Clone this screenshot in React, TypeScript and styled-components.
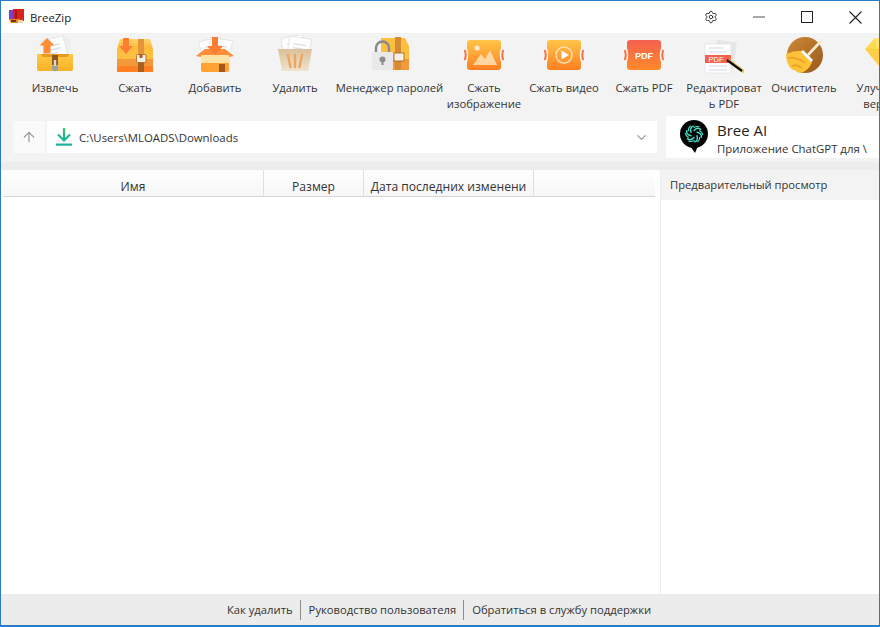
import React from 'react';
import styled, { createGlobalStyle } from 'styled-components';
import { Settings, ArrowUp, ChevronDown } from 'lucide-react';

const GlobalStyle = createGlobalStyle`
  html, body {
    margin: 0;
    height: 100%;
    overflow: hidden;
    background: #fff;
  }
  #root {
    height: 100%;
  }
`;

const Window = styled.div`
  box-sizing: border-box;
  display: flex;
  flex-direction: column;
  height: 627px;
  width: 880px;
  border: 1px solid #2b7bc4;
  border-bottom-width: 2px;
  background: #fff;
  font-family: 'Open Sans', 'Noto Sans', sans-serif;
  font-size: 12px;
  color: #333;
  overflow: hidden;
`;

const TitleBar = styled.div`
  display: flex;
  align-items: center;
  height: 32px;
  flex-shrink: 0;
  padding-left: 7px;
  background: #fff;
`;

const AppTitle = styled.span`
  margin-left: 5px;
  font-size: 11.4px;
  color: #222;
  flex: 1;
`;

const WindowButton = styled.div<{ $width: number }>`
  display: flex;
  align-items: center;
  justify-content: center;
  width: ${(p) => p.$width}px;
  height: 32px;
  color: #222;
`;

const MinimizeMark = styled.div`
  width: 12px;
  height: 1.5px;
  background: #a8a8a8;
`;

const MaximizeMark = styled.div`
  box-sizing: border-box;
  width: 12px;
  height: 12px;
  border: 1.4px solid #222;
`;

const Toolbar = styled.div`
  flex-shrink: 0;
  background: #f3f3f3;
`;

const ToolRow = styled.div`
  display: flex;
  height: 79px;
  padding-left: 14px;
  overflow: hidden;
`;

const Tool = styled.div<{ $width?: number }>`
  display: flex;
  flex-direction: column;
  align-items: center;
  flex-shrink: 0;
  box-sizing: border-box;
  width: ${(p) => p.$width ?? 80}px;
  padding-top: 2px;
`;

const ToolIcon = styled.svg`
  display: block;
  width: 40px;
  height: 40px;
  flex-shrink: 0;
`;

const ToolLabel = styled.div`
  margin-top: 5px;
  width: 100%;
  text-align: center;
  font-size: 11.25px;
  line-height: 16px;
  color: #333;
  overflow-wrap: anywhere;
`;

const AddressRow = styled.div`
  display: flex;
  align-items: center;
  gap: 2px;
  height: 50px;
  padding-left: 12px;
`;

const UpButton = styled.div`
  display: flex;
  align-items: center;
  justify-content: center;
  width: 32px;
  height: 32px;
  background: #fafafa;
  color: #999;
`;

const PathBar = styled.div`
  display: flex;
  align-items: center;
  width: 610px;
  height: 32px;
  background: #fff;
  padding: 0 8px 0 9px;
  box-sizing: border-box;
`;

const PathText = styled.span`
  flex: 1;
  margin-left: 7px;
  font-size: 11.4px;
  color: #333;
`;

const AiCard = styled.div`
  display: flex;
  align-items: center;
  flex: 1;
  height: 42px;
  margin-left: 7px;
  padding-left: 14px;
  background: #fff;
  overflow: hidden;
`;

const AiText = styled.div`
  margin: 2px 0 0 9px;
  white-space: nowrap;
`;

const AiTitle = styled.div`
  font-size: 15px;
  line-height: 20px;
  color: #222;
`;

const AiSub = styled.div`
  margin-top: 1px;
  font-size: 11.4px;
  line-height: 16px;
  color: #333;
`;

const Strip = styled.div`
  height: 8px;
  flex-shrink: 0;
  background: #ededed;
`;

const Main = styled.div`
  display: flex;
  flex: 1;
  min-height: 0;
`;

const ListPane = styled.div`
  box-sizing: border-box;
  width: 659px;
  padding: 0 5px 0 2px;
  background: #fff;
`;

const TableHeader = styled.div`
  display: grid;
  grid-template-columns: 261px 100px 170px 1fr;
  height: 27px;
  box-sizing: border-box;
  border-bottom: 1px solid #d6d6d6;
  background: linear-gradient(#fff, #f6f6f6);
`;

const HeaderCell = styled.div`
  display: flex;
  align-items: center;
  justify-content: center;
  padding-top: 6px;
  border-right: 1px solid #e0e0e0;
  font-size: 12.1px;
  color: #333;
  white-space: nowrap;
  overflow: hidden;

  &:last-child {
    border-right: none;
  }
`;

const PreviewPane = styled.div`
  flex: 1;
  border-left: 1px solid #eeeeee;
`;

const PreviewHeader = styled.div`
  display: flex;
  align-items: center;
  box-sizing: border-box;
  height: 30px;
  padding: 0 0 2px 9px;
  background: #f3f3f3;
  font-size: 11.2px;
  color: #333;
`;

const Footer = styled.div`
  display: flex;
  align-items: center;
  justify-content: center;
  box-sizing: border-box;
  height: 31px;
  padding: 1px 3px 0 0;
  flex-shrink: 0;
  background: #ececec;
`;

const FooterLink = styled.span`
  padding: 0 7px 0 8px;
  font-size: 11.25px;
  line-height: 20px;
  color: #333;
  border-left: 1px solid #8e8e8e;

  &:first-child {
    border-left: none;
  }
`;

const AppLogo = () => (
  <svg width="17" height="16" viewBox="0 0 17 16">
    <rect x="1" y="1" width="7" height="10" fill="#7b3fd0" />
    <rect x="5" y="0" width="11" height="12" fill="#d9231f" />
    <rect x="7" y="1" width="2" height="10" fill="#a8160f" />
    <path d="M1 10h11l2 4H3z" fill="#e8862a" />
    <rect x="10" y="11" width="5" height="3" fill="#f4d9a0" />
    <rect x="3" y="11" width="5" height="2" fill="#7a2a10" />
  </svg>
);

const Paper = ({ angle, x = 9, y = 2 }: { angle: number; x?: number; y?: number }) => (
  <g transform={`rotate(${angle} 20 14)`}>
    <rect x={x} y={y} width="22" height="22" fill="#fdfdfd" stroke="#dedede" strokeWidth="0.7" />
    <path d={`M${x + 5} ${y + 7}h12M${x + 5} ${y + 11}h12M${x + 5} ${y + 15}h8`} stroke="#cfd6dc" strokeWidth="1" />
  </g>
);

const ExtractIcon = () => (
  <ToolIcon viewBox="0 0 40 40">
    <defs>
      <linearGradient id="extractTray" x1="0" y1="0" x2="0" y2="1">
        <stop offset="0" stopColor="#ffcb45" />
        <stop offset="1" stopColor="#fab024" />
      </linearGradient>
    </defs>
    <rect x="24" y="3" width="11" height="18" fill="#eeeeee" transform="rotate(8 30 12)" />
    <Paper angle={-14} x={9} y={3} />
    <path d="M12 3l7.5 7.5h-4v8h-7v-8h-4z" fill="#ff8c35" />
    <path d="M2 19h4l1 3h26l1-3h4v15a2 2 0 0 1-2 2H4a2 2 0 0 1-2-2z" fill="url(#extractTray)" />
    <path d="M6 19h28l-1 3H7z" fill="#e89a1e" />
    <rect x="17" y="20" width="6" height="10" fill="#8d5522" />
    <circle cx="20" cy="33" r="3.2" fill="#9aa0a6" />
    <rect x="18.8" y="25" width="2.4" height="6" fill="#d9d9d9" />
  </ToolIcon>
);

const CompressIcon = () => (
  <ToolIcon viewBox="0 0 40 40">
    <defs>
      <linearGradient id="compressLid" x1="0" y1="0" x2="0" y2="1">
        <stop offset="0" stopColor="#ffd466" />
        <stop offset="1" stopColor="#fdb638" />
      </linearGradient>
    </defs>
    <path d="M5 4h30l3 10H2z" fill="url(#compressLid)" />
    <rect x="2" y="14" width="36" height="10" fill="#fcbf3f" />
    <rect x="2" y="24" width="36" height="7" fill="#f3993a" />
    <rect x="2" y="31" width="36" height="6" fill="#ff7f22" />
    <path d="M23 4h6v20h-6z" fill="#e3963c" />
    <path d="M23 24h6v13h-6z" fill="#a9601d" />
    <rect x="21.5" y="19.5" width="9.5" height="8" rx="1" fill="#f4efe7" stroke="#a9601d" strokeWidth="0.8" />
    <rect x="24.5" y="19.5" width="3" height="3.5" fill="#a9601d" />
    <path d="M8 3h6v8h4l-7 8-7-8h4z" fill="#ff7d33" />
  </ToolIcon>
);

const AddIcon = () => (
  <ToolIcon viewBox="0 0 40 40">
    <Paper angle={-16} x={6} y={3} />
    <Paper angle={10} x={14} y={3} />
    <path d="M1 21l9-7h20l9 7-5 1H6z" fill="#ff8e3a" />
    <rect x="6" y="20" width="28" height="8" fill="#ffe3a4" />
    <path d="M6 28h28v7a2 2 0 0 1-2 2H8a2 2 0 0 1-2-2z" fill="#ffa233" />
    <rect x="24" y="29" width="6" height="8" fill="#a5561a" />
    <path d="M17 2h6v9h5l-8 9-8-9h5z" fill="#ff7d33" />
  </ToolIcon>
);

const DeleteIcon = () => (
  <ToolIcon viewBox="0 0 40 40">
    <defs>
      <linearGradient id="basket" x1="0" y1="0" x2="0" y2="1">
        <stop offset="0" stopColor="#dcc09a" />
        <stop offset="1" stopColor="#eee3cc" />
      </linearGradient>
    </defs>
    <Paper angle={-10} x={8} y={1} />
    <Paper angle={8} x={13} y={2} />
    <path d="M3 14h34l-4 22H7z" fill="url(#basket)" />
    <path d="M13 20l2.5 12M20 20v12M27 20l-2.5 12" stroke="#eda65f" strokeWidth="2.4" strokeLinecap="round" />
  </ToolIcon>
);

const PasswordIcon = () => (
  <ToolIcon viewBox="0 0 40 40">
    <path d="M11 3h24l4 8v24H11z" fill="#fcbf3f" />
    <rect x="11" y="24" width="28" height="11" fill="#f3993a" />
    <rect x="25" y="2" width="6" height="33" fill="#d58a36" />
    <rect x="24" y="18" width="10" height="8" fill="#f4efe7" stroke="#a9601d" strokeWidth="0.8" />
    <path d="M6 18v-5a6.5 6.5 0 0 1 13 0v5" fill="none" stroke="#8a8a8a" strokeWidth="2.4" />
    <rect x="2" y="17" width="21" height="18" rx="1.5" fill="#e9e9e9" />
    <circle cx="12.5" cy="24.5" r="3" fill="#8d8d8d" />
    <rect x="11.5" y="25" width="2" height="5" fill="#8d8d8d" />
  </ToolIcon>
);

const badgePath =
  'M6 5H34Q37 5 37 8V13Q34.5 20 37 27V32Q37 35 34 35H6Q3 35 3 32V27Q5.5 20 3 13V8Q3 5 6 5Z';

const CompressBadge = ({
  id,
  top,
  bottom,
  children,
}: {
  id: string;
  top: string;
  bottom: string;
  children: React.ReactNode;
}) => (
  <ToolIcon viewBox="0 0 40 40">
    <defs>
      <linearGradient id={id} x1="0" y1="0" x2="0" y2="1">
        <stop offset="0" stopColor={top} />
        <stop offset="1" stopColor={bottom} />
      </linearGradient>
    </defs>
    <path d={badgePath} fill={`url(#${id})`} />
    <path d="M0.5 15Q3 20 0.5 25M39.5 15Q37 20 39.5 25" fill="none" stroke="#ff6f3c" strokeWidth="2" />
    {children}
  </ToolIcon>
);

const EditPdfIcon = () => (
  <ToolIcon viewBox="0 0 40 40">
    <rect x="11" y="6" width="20" height="27" fill="#e6e6e6" transform="rotate(8 21 20)" />
    <rect x="1" y="9" width="26" height="29" fill="#fdfdfd" stroke="#e2e2e2" strokeWidth="0.6" />
    <path d="M5 13h14M5 17h18M5 31h18M5 35h18" stroke="#d3dbe3" strokeWidth="1" />
    <rect x="1" y="20" width="26" height="8" fill="#f4624f" />
    <text x="12" y="27" fontFamily="'Liberation Sans', sans-serif" fontSize="7.5" fill="#fff" textAnchor="middle">
      PDF
    </text>
    <path d="M24 25L40 37" stroke="#f5c542" strokeWidth="3.4" />
    <path d="M23 25L38 36" stroke="#111" strokeWidth="2.2" />
  </ToolIcon>
);

const CleanerIcon = () => (
  <ToolIcon viewBox="0 0 40 40">
    <defs>
      <linearGradient id="cleanerDisc" x1="0" y1="0" x2="1" y2="1">
        <stop offset="0" stopColor="#cf8a35" />
        <stop offset="1" stopColor="#97581b" />
      </linearGradient>
    </defs>
    <circle cx="21" cy="20" r="18" fill="url(#cleanerDisc)" />
    <path d="M2 19Q11 15 19 16L28 27Q25 36 16 38Q13 38 11 35Q7 35 5 31Q2 26 2 19Z" fill="#fcc238" />
    <path d="M4 23Q13 22 21 28M8 31Q13 29 18 33" fill="none" stroke="#f1a32a" strokeWidth="2" />
    <path d="M18 16L28 26" stroke="#fff" strokeWidth="3" />
    <path d="M24 20L38 5" stroke="#f9ecd0" strokeWidth="2.6" />
  </ToolIcon>
);

const PremiumIcon = () => (
  <ToolIcon viewBox="0 0 40 40">
    <path d="M11 3H29L39 14H1z" fill="#ffd94f" />
    <path d="M13 14H27L20 37z" fill="#ffc02e" />
    <path d="M1 14H13L20 37z" fill="#ffcf45" />
    <path d="M39 14H27L20 37z" fill="#ffa91f" />
    <path d="M11 3L13 14H27L29 3z" fill="#ffe47a" />
  </ToolIcon>
);

const DownloadIcon = () => (
  <svg width="16" height="20" viewBox="0 0 16 20">
    <defs>
      <linearGradient id="downloadArrow" x1="0" y1="0" x2="0" y2="1">
        <stop offset="0" stopColor="#3cc267" />
        <stop offset="1" stopColor="#16b39a" />
      </linearGradient>
    </defs>
    <path d="M8 1v12M2 7.5L8 13.5 14 7.5" fill="none" stroke="url(#downloadArrow)" strokeWidth="2.2" />
    <rect x="0" y="16.5" width="16" height="2.2" fill="#16b39a" />
  </svg>
);

const BreeLogo = () => (
  <svg width="28" height="34" viewBox="0 0 28 34">
    <circle cx="14" cy="14" r="14" fill="#050505" />
    <path d="M10 26L15 33L18 26z" fill="#050505" />
    {[0, 60, 120, 180, 240, 300].map((angle) => (
      <g key={angle} transform={`rotate(${angle} 14 14)`}>
        <path d="M14 10.5C16.5 8 19 7.5 20.5 9.5" fill="none" stroke="#45e3cf" strokeWidth="1.4" strokeLinecap="round" />
        <path d="M14 7.5C16 6.2 17.5 6.2 19 6.8" fill="none" stroke="#45e3cf" strokeWidth="1.1" strokeLinecap="round" />
      </g>
    ))}
  </svg>
);

const CloseIcon = () => (
  <svg width="13" height="13" viewBox="0 0 13 13">
    <path d="M0.5 0.5L12.5 12.5M12.5 0.5L0.5 12.5" stroke="#222" strokeWidth="1.1" />
  </svg>
);

const badgeText = "'Liberation Sans', sans-serif";

const tools: { label: string; width?: number; icon: React.ReactNode }[] = [
  { label: 'Извлечь', icon: <ExtractIcon /> },
  { label: 'Сжать', icon: <CompressIcon /> },
  { label: 'Добавить', icon: <AddIcon /> },
  { label: 'Удалить', icon: <DeleteIcon /> },
  { label: 'Менеджер паролей', width: 109, icon: <PasswordIcon /> },
  {
    label: 'Сжать изображение',
    icon: (
      <CompressBadge id="badgeImage" top="#ffc548" bottom="#ff7f22">
        <circle cx="13" cy="13" r="2.6" fill="#ffe9c4" />
        <path d="M9 30L17 19L21 24L26 15L33 30z" fill="#ffe2b4" opacity="0.85" />
      </CompressBadge>
    ),
  },
  {
    label: 'Сжать видео',
    icon: (
      <CompressBadge id="badgeVideo" top="#ffc548" bottom="#ff7f22">
        <circle cx="20" cy="20" r="8" fill="none" stroke="#ffe2b4" strokeWidth="1.4" />
        <path d="M17.5 15.5L25 20L17.5 24.5z" fill="#fff" />
      </CompressBadge>
    ),
  },
  {
    label: 'Сжать PDF',
    icon: (
      <CompressBadge id="badgePdf" top="#f4604f" bottom="#ff8a2a">
        <text x="20" y="23.5" fontFamily={badgeText} fontSize="9" fontWeight="bold" fill="#fff" textAnchor="middle">
          PDF
        </text>
      </CompressBadge>
    ),
  },
  { label: 'Редактировать PDF', icon: <EditPdfIcon /> },
  { label: 'Очиститель', icon: <CleanerIcon /> },
  { label: 'Улучшить версию', icon: <PremiumIcon /> },
];

const App = () => {
  return (
    <Window>
      <GlobalStyle />
      <TitleBar>
        <AppLogo />
        <AppTitle>BreeZip</AppTitle>
        <WindowButton $width={50}>
          <Settings size={14} strokeWidth={1.5} />
        </WindowButton>
        <WindowButton $width={46}>
          <MinimizeMark />
        </WindowButton>
        <WindowButton $width={50}>
          <MaximizeMark />
        </WindowButton>
        <WindowButton $width={47}>
          <CloseIcon />
        </WindowButton>
      </TitleBar>
      <Toolbar>
        <ToolRow>
          {tools.map((tool) => (
            <Tool key={tool.label} $width={tool.width}>
              {tool.icon}
              <ToolLabel>{tool.label}</ToolLabel>
            </Tool>
          ))}
        </ToolRow>
        <AddressRow>
          <UpButton>
            <ArrowUp size={16} strokeWidth={1.8} />
          </UpButton>
          <PathBar>
            <DownloadIcon />
            <PathText>C:\Users\MLOADS\Downloads</PathText>
            <ChevronDown size={15} color="#999" />
          </PathBar>
          <AiCard>
            <BreeLogo />
            <AiText>
              <AiTitle>Bree AI</AiTitle>
              <AiSub>Приложение ChatGPT для \</AiSub>
            </AiText>
          </AiCard>
        </AddressRow>
      </Toolbar>
      <Strip />
      <Main>
        <ListPane>
          <TableHeader>
            <HeaderCell>Имя</HeaderCell>
            <HeaderCell>Размер</HeaderCell>
            <HeaderCell>Дата последних изменени</HeaderCell>
            <HeaderCell />
          </TableHeader>
        </ListPane>
        <PreviewPane>
          <PreviewHeader>Предварительный просмотр</PreviewHeader>
        </PreviewPane>
      </Main>
      <Footer>
        <FooterLink>Как удалить</FooterLink>
        <FooterLink>Руководство пользователя</FooterLink>
        <FooterLink>Обратиться в службу поддержки</FooterLink>
      </Footer>
    </Window>
  );
};

export default App;
